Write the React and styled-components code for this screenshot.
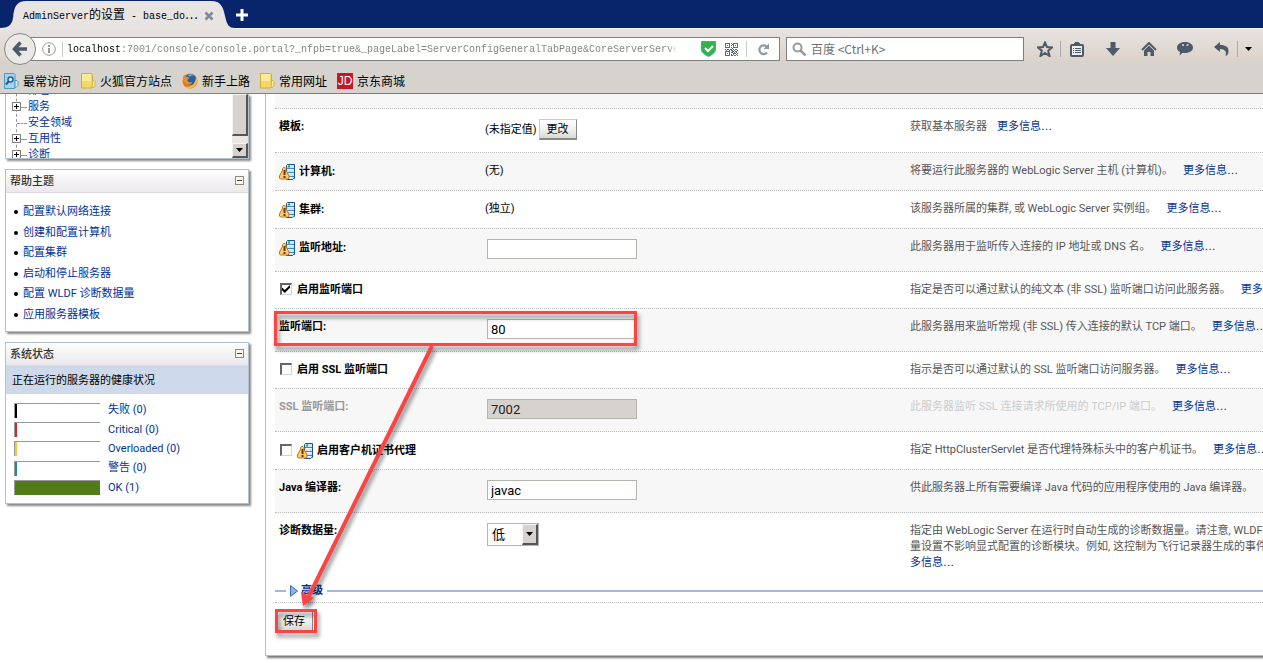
import React from "react";
import styled, { createGlobalStyle } from "styled-components";

const ui = `Roboto, "Noto Sans CJK SC", sans-serif`;
const cjk = `"Noto Sans CJK SC", sans-serif`;
const mono = `"Liberation Mono", "Noto Sans CJK SC", monospace`;

const Global = createGlobalStyle`
  * { box-sizing: border-box; }
  body { margin: 0; background: #fff; color: #000; font: 11px/16px ${ui}; }
  button, input, select { font: inherit; margin: 0; color: inherit; }
  a { color: #003399; text-decoration: none; }
  ul { list-style: none; margin: 0; padding: 0; }
  svg { display: block; flex: none; }
`;

/* ---------- browser chrome ---------- */

const Chrome = styled.header`
  background: #d6d3ce;
  border-bottom: 1px solid #808080;
  font-family: ${cjk};
  font-size: 12px;
`;
const TabStrip = styled.div`
  display: flex;
  height: 29px;
  background: #08246b;
  border-bottom: 1px solid #f4f1ef;
`;
const Tab = styled.div`
  position: relative;
  display: flex;
  align-items: center;
  justify-content: space-between;
  width: 235px;
  height: 29px;
  padding: 2px 20px 0 23px;
  white-space: nowrap;
`;
const TabShape = styled.svg`
  position: absolute;
  inset: 0;
`;
const TabTitle = styled.span`
  position: relative;
  font-family: ${cjk};
`;
const Mono = styled.span`
  font-family: ${mono};
  font-size: 10px;
`;
const IconButton = styled.button`
  position: relative;
  display: grid;
  place-items: center;
  width: ${(p) => p.$w || 32}px;
  height: 24px;
  padding: 0;
  border: 0;
  background: none;
`;
const NewTab = styled(IconButton)`
  height: 28px;
  padding-top: 2px;
`;
const Toolbar = styled.div`
  display: flex;
  height: 33px;
  padding: 8px 5px 0 4px;
  background: linear-gradient(#e8e3e1, #dbd3c9);
`;
const BackButton = styled.button`
  position: relative;
  flex: none;
  display: grid;
  place-items: center;
  width: 32px;
  height: 32px;
  margin: -4px -16px 0 0;
  padding: 0;
  border: 1px solid #858585;
  border-radius: 50%;
  background: #ebe8e5;
`;
const Field = styled.div`
  display: flex;
  align-items: center;
  height: 24px;
  border: 1px solid #808080;
  background: #fff;
`;
const UrlField = styled(Field)`
  flex: 1;
  min-width: 0;
  padding-left: 21px;
`;
const SearchField = styled(Field)`
  flex: none;
  width: 238px;
  margin: 0 6px;
  padding-left: 5px;
`;
const UrlInput = styled.input`
  flex: 1;
  min-width: 0;
  height: 20px;
  margin: 0 24px 0 4px;
  padding: 0;
  border: 0;
  outline: 0;
  font-family: ${mono};
  font-size: 10px;
  color: transparent;
  background: linear-gradient(90deg, #000 54px, #808080 54px calc(100% - 8px), transparent);
  background-clip: text;
  -webkit-background-clip: text;
`;
const SearchInput = styled.input`
  flex: 1;
  min-width: 0;
  padding: 0 0 0 4px;
  border: 0;
  outline: 0;
  background: none;
  font-family: ${cjk};
  &::placeholder { color: #707070; opacity: 1; }
`;
const Divider = styled.i`
  flex: none;
  width: 1px;
  height: 16px;
  margin-left: ${(p) => p.$gap || 0}px;
  background: ${(p) => p.$c || "#ccc"};
`;
const Actions = styled.div`
  display: flex;
  align-items: center;
  height: 24px;
`;
const Bookmarks = styled.nav`
  display: flex;
  align-items: center;
  gap: 10px;
  height: 31px;
  padding: 6px 3px 0;
`;
const Bookmark = styled.a`
  display: flex;
  align-items: center;
  gap: 4px;
  color: #000;
`;
const JdLogo = styled.span`
  width: 16px;
  height: 16px;
  background: #c81623;
  color: #fff;
  font: 12px/16px "Liberation Sans", sans-serif;
  text-align: center;
`;

/* ---------- page ---------- */

const Page = styled.div`
  display: flex;
  align-items: flex-start;
`;
const Sidebar = styled.aside`
  flex: none;
  display: flex;
  flex-direction: column;
  gap: 10px;
  width: 265px;
  padding: 0 16px 0 5px;
`;
const Panel = styled.section`
  border: 1px solid #b4c0c9;
  background: #fff;
  box-shadow: 2px 2px 2px #888;
`;
const TreePanel = styled(Panel)`
  display: flex;
  height: 65px;
  border-top: 0;
  overflow: hidden;
`;
const Tree = styled.ul`
  flex: 1;
  margin: -11px 0 0 10px;
  border-left: 1px dashed #999;
`;
const TreeItem = styled.li`
  display: flex;
  align-items: center;
  height: 16px;
`;
const Expander = styled.span`
  width: 9px;
  height: 9px;
  margin: 0 0 2px -5px;
  border: 1px solid #808080;
  background:
    linear-gradient(#000, #000) center / 5px 1px no-repeat,
    linear-gradient(#000, #000) center / 1px 5px no-repeat,
    #fff;
`;
const Branch = styled.span`
  width: ${(p) => p.$w}px;
  margin-right: 1px;
  border-top: 1px dashed #999;
`;
const ScrollBar = styled.div`
  display: flex;
  flex-direction: column;
  justify-content: space-between;
  width: 16px;
  background: #eae8e4;
`;
const Raised = styled.div`
  display: grid;
  place-items: center;
  width: 16px;
  height: ${(p) => p.$h}px;
  border: 1px solid #f4f4f4;
  border-right: 2px solid #555;
  border-bottom: 2px solid #555;
  background: #d6d3ce;
`;
const PanelHead = styled.header`
  display: flex;
  align-items: center;
  justify-content: space-between;
  height: 23px;
  padding: 0 4px;
  border-bottom: 1px solid #ddd8dd;
  background: linear-gradient(#fff, #f4f3f4 50%, #ece8ec);
`;
const PanelTitle = styled.h2`
  margin: 0;
  padding-top: 2px;
  font-size: 11px;
  font-weight: 500;
  color: #333;
`;
const Collapse = styled.button`
  width: 9px;
  height: 9px;
  margin-bottom: 2px;
  padding: 0;
  border: 1px solid #8c8c78;
  background: linear-gradient(#444, #444) center / 5px 1px no-repeat, #f8f8ee;
`;
const Topics = styled.ul`
  padding: 9px 8px 6px;
`;
const Topic = styled.li`
  display: flex;
  align-items: center;
  gap: 5px;
  height: 20px;
  &:nth-child(even) { height: 21px; }
  &::before {
    content: "";
    width: 4px;
    height: 4px;
    border-radius: 50%;
    background: #000;
  }
`;
const StatusBand = styled.h3`
  margin: 0;
  padding: 7px 6px 5px;
  background: #cedaec;
  font-size: 11px;
  font-weight: 400;
`;
const StatusList = styled.ul`
  padding: 6px 8px;
`;
const StatusItem = styled.li`
  display: flex;
  align-items: center;
  gap: 8px;
  height: 19px;
  &:nth-child(3n + 1) { height: 20px; }
`;
const Meter = styled.span`
  width: 86px;
  height: 15px;
  border: 1px solid #999;
  border-width: 1px 0 0 1px;
  background: linear-gradient(${(p) => p.$c}, ${(p) => p.$c}) left / ${(p) => (p.$full ? "100%" : "2px")} 100% no-repeat;
`;

const Main = styled.main`
  position: relative;
  flex: 1;
  min-width: 0;
  margin-bottom: 7px;
  padding: 0 0 23px 9px;
  border-left: 1px solid #b4c0c9;
  border-bottom: 1px solid #b4c0c9;
  box-shadow: 2px 2px 2px #777;
`;
const Row = styled.div`
  display: grid;
  grid-template-columns: 206px 425px minmax(0, 1fr);
  align-items: start;
  padding: 10px 0 10px 4px;
  border-bottom: ${(p) => (p.$last ? "0" : "1px dotted #bbb")};
  background: ${(p) => (p.$alt ? "#f7f7f7" : "#fff")};
`;
const TopRow = styled.div`
  height: 15px;
  border-bottom: 1px dotted #bbb;
  background: #f7f7f7;
`;
const Label = styled.label`
  display: flex;
  align-items: center;
  gap: 4px;
  font-weight: 700;
  white-space: nowrap;
  color: ${(p) => (p.$off ? "#999" : "#000")};
`;
const Control = styled.div`
  display: flex;
  align-items: center;
  padding: 0 0 2px 2px;
`;
const PickerControl = styled(Control)`
  gap: 2px;
  padding-left: 0;
`;
const TextValue = styled.span``;
const TextInput = styled.input`
  width: 150px;
  height: 20px;
  padding: 1px 3px 0;
  border: 1px solid #b5b3ac;
  background: #fff;
  font-size: 13px;
  outline: 0;
  &:disabled { background: #d6d3ce; color: #222; }
`;
const Check = styled.input`
  appearance: none;
  width: 12px;
  height: 12px;
  margin: 0 1px 2px;
  border: 1px solid #d6d3ce;
  border-top: 2px solid #666;
  border-left: 2px solid #666;
  background: #fff;
  &:checked::after {
    content: "";
    display: block;
    width: 8px;
    height: 8px;
    background: #000;
    clip-path: polygon(0 30%, 35% 62%, 100% 0, 100% 35%, 35% 100%, 0 65%);
  }
`;
const Button = styled.button`
  width: 38px;
  height: 21px;
  padding: 1px 0 0;
  border: 1px solid #ccc;
  border-right-color: #888;
  border-bottom: 2px solid #888;
  background: linear-gradient(#fff, #f2f2f1 50%, #d9d9d5);
`;
const SelectBox = styled.span`
  position: relative;
  display: flex;
  width: 52px;
  height: 23px;
  border: 1px solid #b5b3ac;
`;
const Select = styled.select`
  appearance: none;
  flex: 1;
  padding: 0 0 0 4px;
  border: 0;
  background: #fff;
  font-size: 13px;
`;
const SelectArrow = styled(Raised)`
  position: absolute;
  right: 0;
  top: 0;
  pointer-events: none;
`;
const Help = styled.p`
  margin: 0;
  overflow: hidden;
  white-space: nowrap;
  color: ${(p) => (p.$off ? "#ccc" : "#555")};
`;
const More = styled.a`
  margin-left: ${(p) => (p.$wrapped ? 0 : 10)}px;
  font-family: "DejaVu Sans", "Noto Sans CJK SC", sans-serif;
`;
const Advanced = styled.div`
  display: flex;
  align-items: center;
  margin-top: 2px;
  padding-bottom: 3px;
  border-bottom: 1px dotted #bbb;
`;
const Rule = styled.i`
  ${(p) => (p.$w ? `width: ${p.$w}px` : "flex: 1")};
  height: 2px;
  background: #a5b8db;
`;
const AdvancedLink = styled.a`
  display: flex;
  align-items: center;
  gap: 3px;
  padding: 0 4px;
  font-weight: 700;
`;
const Footer = styled.div`
  padding: 8px 0 0;
`;
const Callout = styled.svg`
  position: absolute;
  left: 0;
  top: 209px;
  pointer-events: none;
  filter: drop-shadow(2px 4px 2px rgba(0, 0, 0, 0.45));
`;

/* ---------- icons ---------- */

const RestartIcon = () => (
  <svg width="16" height="17" viewBox="0 -1 16 17">
    <path d="M7.500 1.500l1-1h7v14h-1l-1 1h-6z" fill="#cfe6fa" stroke="#15549c" />
    <path d="M8 4.500h7M8 8.500h7M8 12.500h7" stroke="#3c86cf" />
    <path d="M9 5.500h5M9 9.500h5M9 13.500h4" stroke="#fff" />
    <path d="M9 2.500h2" stroke="#2fa336" strokeWidth="2" />
    <path d="M4.500 3.500h1.500l1 1v2l2 3.500 1 2v2l-1 1h-7.500l-1-1v-2l1-2 2-3.500v-2z" fill="#ffce6b" stroke="#c0701a" />
    <path d="M5.500 6v5M5.500 12v2" stroke="#6b3800" strokeWidth="2" />
  </svg>
);
const FolderIcon = () => (
  <svg width="15" height="16" viewBox="0 0 15 16">
    <path d="M.5.500h10l1 1v13l-1 .5H.5z" fill="#f3d866" stroke="#cfae3d" />
    <path d="M11.500 7.500H13l1 1v4l-1.500 2h-1.500z" fill="#fbeb9b" stroke="#cfae3d" />
    <path d="M1 1h9v7H1z" fill="#fbea98" />
  </svg>
);
const MostVisitedIcon = () => (
  <svg width="16" height="16" viewBox="0 0 16 16">
    <path d="M1.500.5H11l1 1V15l-1 .5H1.500z" fill="#a6d2ee" stroke="#5596bf" />
    <path d="M12 7.500h2l1 1v4l-2 2h-1z" fill="#d2ebfa" stroke="#5596bf" />
    <circle cx="7.500" cy="6.500" r="2.500" fill="#d9effc" stroke="#256094" strokeWidth="1.500" />
    <path d="M5.500 8.500L3 11.500" stroke="#256094" strokeWidth="2" />
  </svg>
);
const FirefoxIcon = () => (
  <svg width="16" height="16" viewBox="0 0 16 16">
    <circle cx="8" cy="8" r="7.500" fill="#e8711c" />
    <circle cx="8.500" cy="6.500" r="5.500" fill="#2461ad" />
    <path d="M6 2c2-1.500 5-1 6 1-2-1-4 0-4 1z" fill="#6db9e8" />
    <path d="M.8 5C1 3 2 2 2.500 1.500L4 4c2-.5 3 .5 3 1.500L5.500 7c0 2 2 3 4.500 2 0 2-2.500 3.500-5 2.500C2 10 1 8 .8 5z" fill="#f08b1d" />
    <path d="M14 3.500c2 4 1 8-2 10.500-3 2-7 2-9.500-.5C9 15 14 11 14 3.500z" fill="#fbc02d" />
  </svg>
);
const DownCaret = () => (
  <svg width="7" height="4" viewBox="0 0 7 4"><path d="M0 0h7L3.500 4z" fill="#000" /></svg>
);
const slate = "#4d5a69";

const qr = [
  "1111101011111", "1000100110001", "1010101010101", "1000100010001", "1111101011111",
  "0000000100000", "1011011010110", "0100101101001", "1111100110110", "1000101101010",
  "1010100011101", "1000101010010", "1111101101101",
];

const Bar = () => (
  <Chrome>
    <TabStrip>
      <Tab>
        <TabShape width="235" height="29" viewBox="0 0 235 29" aria-hidden="true">
          <path d="M0 29V28C8 28 12 25 13 18C14 7 16 1 27 1H211C221 1 223 7 225 16C227 25 229 28 235 28V29z" fill="#e8e4e1" />
        </TabShape>
        <TabTitle><Mono>AdminServer</Mono>的设置<Mono> - base_do</Mono>…</TabTitle>
        <IconButton $w={12} aria-label="关闭标签页">
          <svg width="10" height="10" viewBox="0 0 10 10"><path d="M1.500 1.500l7 7M8.500 1.500l-7 7" stroke="#7e8996" strokeWidth="2.500" /></svg>
        </IconButton>
      </Tab>
      <NewTab $w={14} aria-label="新标签页">
        <svg width="12" height="12" viewBox="0 0 12 12"><path d="M6 0v12M0 6h12" stroke="#fff" strokeWidth="3" /></svg>
      </NewTab>
    </TabStrip>
    <Toolbar>
      <BackButton aria-label="后退">
        <svg width="16" height="16" viewBox="0 0 16 16"><path d="M8.500 1.500L2.500 8l6 6.500M3 8h12" fill="none" stroke={slate} strokeWidth="3.500" /></svg>
      </BackButton>
      <UrlField>
        <svg width="14" height="14" viewBox="0 0 14 14">
          <circle cx="7" cy="7" r="6.300" fill="none" stroke="#999" />
          <path d="M7 3v2M7 6v5" stroke="#999" strokeWidth="2" />
        </svg>
        <Divider $gap={6} />
        <UrlInput aria-label="网址" readOnly value="localhost:7001/console/console.portal?_nfpb=true&_pageLabel=ServerConfigGeneralTabPage&CoreServerServe" />
        <svg width="15" height="16" viewBox="0 0 15 16">
          <path d="M.5.5h14v8c0 3-3 5-7 7-4-2-7-4-7-7z" fill="#35b34a" stroke="#35a9d6" />
          <path d="M4 7l3 3 5-5" fill="none" stroke="#fff" strokeWidth="2" />
        </svg>
        <IconButton $w={30} aria-label="二维码">
          <svg width="13" height="13" viewBox="0 0 13 13" shapeRendering="crispEdges">
            {qr.map((line, y) => line.split("").map((c, x) => c === "1" && <rect key={`${x}-${y}`} x={x} y={y} width="1" height="1" fill="#5f6875" />))}
          </svg>
        </IconButton>
        <Divider />
        <IconButton aria-label="重新加载">
          <svg width="13" height="13" viewBox="0 0 13 13">
            <path d="M9.500 3.500A4.300 4.300 0 1 0 10 9.500" fill="none" stroke="#8e99a6" strokeWidth="2.200" />
            <path d="M12 .5V6H6.500z" fill="#8e99a6" />
          </svg>
        </IconButton>
      </UrlField>
      <SearchField>
        <svg width="15" height="14" viewBox="0 0 15 14">
          <circle cx="5.500" cy="5.500" r="4" fill="none" stroke="#999" strokeWidth="2" />
          <path d="M8.500 8.500l5 5" stroke="#999" strokeWidth="2.500" />
        </svg>
        <SearchInput aria-label="搜索" placeholder="百度 <Ctrl+K>" />
      </SearchField>
      <Actions>
        <IconButton $w={30} aria-label="收藏">
          <svg width="16" height="16" viewBox="0 0 16 16"><path d="M8 1.500l2 4.500 5 .5-3.800 3.200L12.500 15 8 12l-4.500 3 1.300-5.300L1 6.500 6 6z" fill="none" stroke={slate} strokeWidth="2" /></svg>
        </IconButton>
        <Divider $c="#aaa" />
        <IconButton aria-label="书签">
          <svg width="14" height="15" viewBox="0 0 14 15">
            <rect x="1" y="3" width="12" height="11" rx="1" fill="#eee" stroke={slate} strokeWidth="2" />
            <path d="M4 2h6M5 1h4" stroke={slate} strokeWidth="2" />
            <path d="M3 6.500h1M5 6.500h6M3 8.500h1M5 8.500h6M3 10.500h1M5 10.500h6" stroke={slate} />
          </svg>
        </IconButton>
        <IconButton $w={40} aria-label="下载">
          <svg width="14" height="14" viewBox="0 0 14 14"><path d="M4.500 0h5v6H14l-7 8-7-8h4.500z" fill={slate} /></svg>
        </IconButton>
        <IconButton aria-label="主页">
          <svg width="16" height="14" viewBox="0 0 16 14">
            <path d="M1 8l7-7 7 7" fill="none" stroke={slate} strokeWidth="2" />
            <path d="M3 8.500l5-5 5 5V14H9.500v-4h-3v4H3z" fill={slate} />
          </svg>
        </IconButton>
        <IconButton $w={40} aria-label="聊天">
          <svg width="16" height="14" viewBox="0 0 16 14">
            <path d="M8 0c5 0 8 2.500 8 5.500S13 11 8 11c-1 0-2 0-2.500-.3L2.500 13.500 3 10C1 9 0 7.500 0 5.500 0 2.500 3 0 8 0z" fill={slate} />
            <path d="M5 3h2M9.500 3h2" stroke="#e5dfd9" strokeWidth="1.500" />
          </svg>
        </IconButton>
        <IconButton aria-label="撤销">
          <svg width="15" height="14" viewBox="0 0 15 14"><path d="M0 5l6-5v3c6 0 9 2 8.500 7-.2 2-1 3.500-3 4C13 10 11 7 6 7v3z" fill={slate} /></svg>
        </IconButton>
        <Divider $c="#aaa" />
        <IconButton $w={20} aria-label="更多工具"><DownCaret /></IconButton>
      </Actions>
    </Toolbar>
    <Bookmarks>
      <Bookmark href="#"><MostVisitedIcon />最常访问</Bookmark>
      <Bookmark href="#"><FolderIcon />火狐官方站点</Bookmark>
      <Bookmark href="#"><FirefoxIcon />新手上路</Bookmark>
      <Bookmark href="#"><FolderIcon />常用网址</Bookmark>
      <Bookmark href="#"><JdLogo>JD</JdLogo>京东商城</Bookmark>
    </Bookmarks>
  </Chrome>
);

/* ---------- data ---------- */

const tree = [
  ["部署", false], ["服务", true], ["安全领域", false], ["互用性", true], ["诊断", true],
];
const topics = [
  "配置默认网络连接", "创建和配置计算机", "配置集群", "启动和停止服务器", "配置 WLDF 诊断数据量", "应用服务器模板",
];
const health = [
  ["失败 (0)", "#000"], ["Critical (0)", "#d8232a"], ["Overloaded (0)", "#f8c83c"], ["警告 (0)", "#26869a"], ["OK (1)", "#527c18", true],
];

const FormRow = ({ id, label, icon, alt, off, check, children, help, more = true }) => (
  <Row $alt={alt}>
    <Label as={id ? "label" : "span"} htmlFor={id} $off={off}>
      {check !== undefined && <Check id={id} type="checkbox" defaultChecked={check} />}
      {icon && <RestartIcon />}
      {label}
    </Label>
    {children || <span />}
    <Help $off={off}>{help}{more && <More href="#">更多信息…</More>}</Help>
  </Row>
);

export default function App() {
  return (
    <>
      <Global />
      <Bar />
      <Page>
        <Sidebar>
          <TreePanel>
            <Tree>
              {tree.map(([name, open]) => (
                <TreeItem key={name}>
                  {open && <Expander />}
                  <Branch $w={open ? 6 : 10} />
                  <a href="#">{name}</a>
                </TreeItem>
              ))}
            </Tree>
            <ScrollBar>
              <Raised $h={42} />
              <Raised $h={15}><DownCaret /></Raised>
            </ScrollBar>
          </TreePanel>
          <Panel>
            <PanelHead><PanelTitle>帮助主题</PanelTitle><Collapse aria-label="折叠" /></PanelHead>
            <Topics>
              {topics.map((t) => <Topic key={t}><a href="#">{t}</a></Topic>)}
            </Topics>
          </Panel>
          <Panel>
            <PanelHead><PanelTitle>系统状态</PanelTitle><Collapse aria-label="折叠" /></PanelHead>
            <StatusBand>正在运行的服务器的健康状况</StatusBand>
            <StatusList>
              {health.map(([name, color, full]) => (
                <StatusItem key={name}><Meter $c={color} $full={full} /><a href="#">{name}</a></StatusItem>
              ))}
            </StatusList>
          </Panel>
        </Sidebar>

        <Main>
          <TopRow />
          <FormRow label="模板:" help="获取基本服务器">
            <PickerControl><TextValue>(未指定值)</TextValue><Button>更改</Button></PickerControl>
          </FormRow>
          <FormRow alt icon label="计算机:" help="将要运行此服务器的 WebLogic Server 主机 (计算机)。">
            <TextValue>(无)</TextValue>
          </FormRow>
          <FormRow icon label="集群:" help="该服务器所属的集群, 或 WebLogic Server 实例组。">
            <TextValue>(独立)</TextValue>
          </FormRow>
          <FormRow alt icon id="address" label="监听地址:" help="此服务器用于监听传入连接的 IP 地址或 DNS 名。">
            <Control><TextInput id="address" /></Control>
          </FormRow>
          <FormRow id="portOn" check label="启用监听端口" help="指定是否可以通过默认的纯文本 (非 SSL) 监听端口访问此服务器。" />
          <FormRow alt id="port" label="监听端口:" help="此服务器用来监听常规 (非 SSL) 传入连接的默认 TCP 端口。">
            <Control><TextInput id="port" defaultValue="80" /></Control>
          </FormRow>
          <FormRow id="sslOn" check={false} label="启用 SSL 监听端口" help="指示是否可以通过默认的 SSL 监听端口访问服务器。" />
          <FormRow alt off id="sslPort" label="SSL 监听端口:" help="此服务器监听 SSL 连接请求所使用的 TCP/IP 端口。">
            <Control><TextInput id="sslPort" disabled defaultValue="7002" /></Control>
          </FormRow>
          <FormRow id="proxy" icon check={false} label="启用客户机证书代理" help="指定 HttpClusterServlet 是否代理特殊标头中的客户机证书。" />
          <FormRow alt id="javac" label="Java 编译器:" more={false} help="供此服务器上所有需要编译 Java 代码的应用程序使用的 Java 编译器。">
            <Control><TextInput id="javac" defaultValue="javac" /></Control>
          </FormRow>
          <Row $last>
            <Label htmlFor="volume">诊断数据量:</Label>
            <Control>
              <SelectBox>
                <Select id="volume" defaultValue="low">
                  <option value="low">低</option>
                </Select>
                <SelectArrow $h={21}><DownCaret /></SelectArrow>
              </SelectBox>
            </Control>
            <Help>
              指定由 WebLogic Server 在运行时自动生成的诊断数据量。请注意, WLDF<br />
              量设置不影响显式配置的诊断模块。例如, 这控制为飞行记录器生成的事件<br />
              <More $wrapped href="#">多信息…</More>
            </Help>
          </Row>
          <Advanced>
            <Rule $w={11} />
            <AdvancedLink href="#">
              <svg width="8" height="12" viewBox="0 0 8 12"><path d="M.5.5L7.500 6 .5 11.500z" fill="#8fb3e0" stroke="#3b6db5" /></svg>
              高级
            </AdvancedLink>
            <Rule />
          </Advanced>
          <Footer><Button>保存</Button></Footer>
          <Callout width="380" height="340" viewBox="0 0 380 340" aria-hidden="true">
            <g fill="none" stroke="#fb4444">
              <rect x="9.500" y="9.500" width="360" height="32" strokeWidth="3" />
              <rect x="10.500" y="307.500" width="39" height="21" strokeWidth="3" />
              <path d="M166 43L43 293" strokeWidth="4" />
            </g>
            <path d="M37 303L35 289L48 295z" fill="#fb4444" />
          </Callout>
        </Main>
      </Page>
    </>
  );
}
